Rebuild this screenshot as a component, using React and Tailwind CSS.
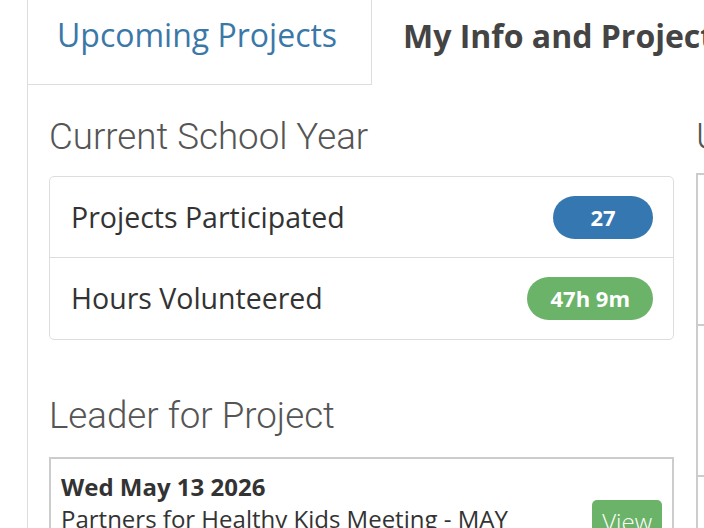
const sans = "font-['Open_Sans',_'Liberation_Sans',_sans-serif]"
const heading = "font-['Roboto',_'Liberation_Sans',_sans-serif] font-light text-[#555]"

const StatRow = ({ label, value, color, last }) => (
  <div
    className={`flex h-[81px] items-center justify-between pl-[21px] pr-[20px] ${
      last ? '' : 'border-b border-[#ddd]'
    }`}
  >
    <span className="text-[28.5px] text-[#333]">{label}</span>
    <span
      className={`flex h-[43px] min-w-[100px] items-center justify-center rounded-full px-[23px] text-[22px] font-bold text-white ${color}`}
    >
      {value}
    </span>
  </div>
)

export default function App() {
  return (
    <div className={`h-[528px] w-[704px] overflow-hidden bg-white ${sans}`}>
      <div className="pl-[27px]">
        <div className="flex">
          <div className="flex h-[85px] w-[345px] shrink-0 items-center border-x border-b border-[#ddd] pb-[14px] pl-[29px]">
            <span className="text-[32px] text-[#3a78a8]">Upcoming Projects</span>
          </div>
          <div className="flex h-[85px] shrink-0 items-center pb-[14px] pl-[31px]">
            <span className="whitespace-nowrap text-[32px] font-bold text-[#444]">
              My Info and Projects
            </span>
          </div>
        </div>

        <div className="border-l border-[#ddd] pl-[21px] pt-[32px]">
          <div className="grid grid-cols-[625px_625px] gap-x-[22px]">
            <div>
              <h3 className={`text-[36.7px] leading-[40px] ${heading}`}>Current School Year</h3>
              <div className="mt-[19px] rounded-[5px] border border-[#ddd]">
                <StatRow label="Projects Participated" value="27" color="bg-[#3577b1]" />
                <StatRow label="Hours Volunteered" value="47h 9m" color="bg-[#6cb36a]" last />
              </div>

              <h3 className={`mt-[56px] text-[36.7px] leading-[40px] ${heading}`}>Leader for Project</h3>
              <div className="mt-[21px] border-2 border-[#ccc] pl-[10px] pr-[10px] pt-[12px]">
                <div className="text-[24px] font-bold leading-[32px] text-[#333]">Wed May 13 2026</div>
                <div className="flex items-start justify-between">
                  <span className="text-[24px] leading-[32px] text-[#333]">
                    Partners for Healthy Kids Meeting - MAY
                  </span>
                  <button className="mt-[-3px] rounded-[5px] bg-[#6cb36a] px-[10px] py-[6px] text-[24px] font-light leading-[32px] text-white">
                    View
                  </button>
                </div>
              </div>
            </div>

            <div>
              <h3 className={`text-[36.7px] leading-[40px] ${heading}`}>Upcoming</h3>
              <div className="mt-[16px] border-2 border-[#ccc]">
                <div className="h-[151px] border-b-2 border-[#ccc]" />
                <div className="h-[151px] border-b-2 border-[#ccc]" />
                <div className="h-[151px]" />
              </div>
            </div>
          </div>
        </div>
      </div>
    </div>
  )
}
